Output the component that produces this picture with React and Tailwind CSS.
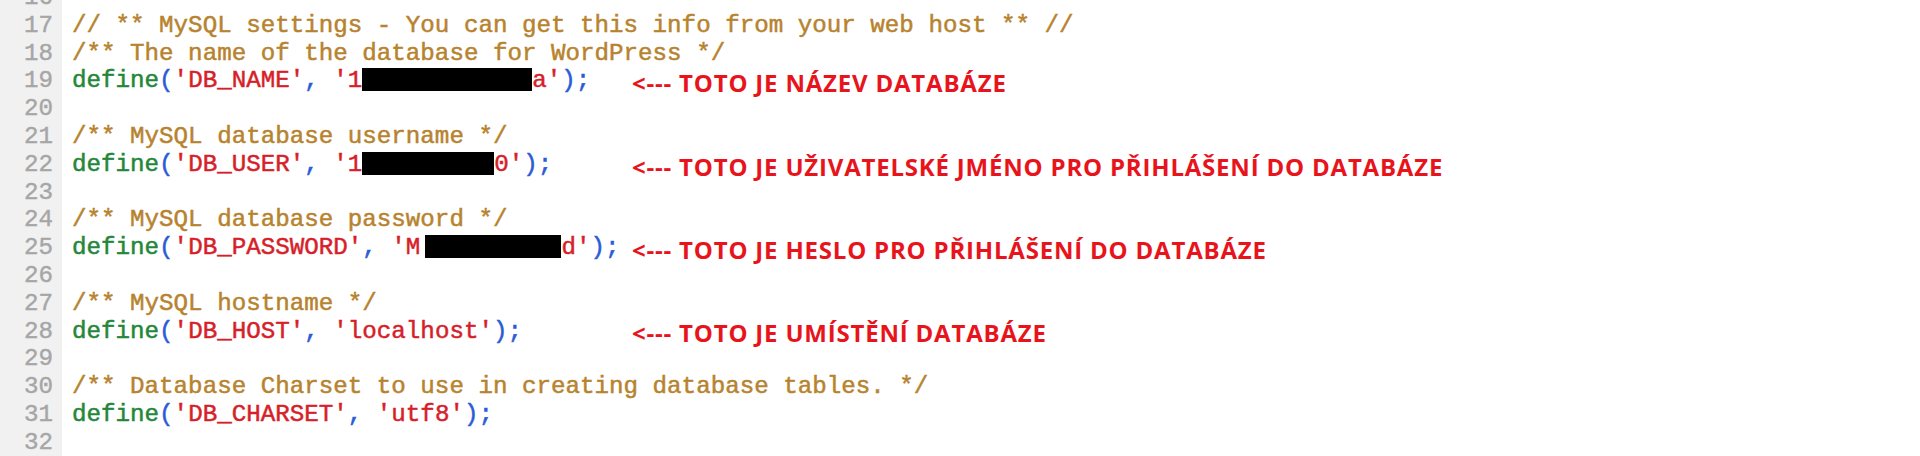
const lines = [
  { n: 16 },
  { n: 17, comment: "// ** MySQL settings - You can get this info from your web host ** //" },
  { n: 18, comment: "/** The name of the database for WordPress */" },
  { n: 19, key: "DB_NAME", pre: "1", box: 170, post: "a", note: "<--- TOTO JE NÁZEV DATABÁZE" },
  { n: 20 },
  { n: 21, comment: "/** MySQL database username */" },
  { n: 22, key: "DB_USER", pre: "1", box: 132, post: "0", note: "<--- TOTO JE UŽIVATELSKÉ JMÉNO PRO PŘIHLÁŠENÍ DO DATABÁZE" },
  { n: 23 },
  { n: 24, comment: "/** MySQL database password */" },
  { n: 25, key: "DB_PASSWORD", pre: "M", box: 136, gap: true, post: "d", note: "<--- TOTO JE HESLO PRO PŘIHLÁŠENÍ DO DATABÁZE" },
  { n: 26 },
  { n: 27, comment: "/** MySQL hostname */" },
  { n: 28, key: "DB_HOST", pre: "localhost", post: "", note: "<--- TOTO JE UMÍSTĚNÍ DATABÁZE" },
  { n: 29 },
  { n: 30, comment: "/** Database Charset to use in creating database tables. */" },
  { n: 31, key: "DB_CHARSET", pre: "utf8", post: "" },
  { n: 32 },
];

function Define({ line }) {
  return (
    <>
      <span className="text-[#23873a]">define</span>
      <span className="text-[#2a5bd6]">(</span>
      <span className="text-[#d61f2a]">'{line.key}'</span>
      <span className="text-[#2a5bd6]">, </span>
      <span className="text-[#d61f2a]">'{line.pre}</span>
      {line.box && (
        <span
          className={`inline-block h-[23px] bg-black align-[-4px] ${line.gap ? "ml-[5px]" : ""}`}
          style={{ width: line.box }}
        ></span>
      )}
      <span className="text-[#d61f2a]">{line.post}'</span>
      <span className="text-[#2a5bd6]">);</span>
    </>
  );
}

export default function App() {
  return (
    <div className="w-[1920px] h-[456px] overflow-hidden bg-white">
      <div className="-mt-[16px] font-['Liberation_Mono',monospace] text-[24.2px] leading-[27.8px] whitespace-pre">
        {lines.map((line) => (
          <div key={line.n} className="flex items-center h-[27.8px]">
            <div className="w-[62px] h-full bg-[#f1f1f1] text-[#a6a6a6] text-right pr-[9px] [-webkit-text-stroke:0.4px]">{line.n}</div>
            <div className="w-[570px] pl-[10px] [-webkit-text-stroke:0.5px]">
              {line.comment && <span className="text-[#b7832f]">{line.comment}</span>}
              {line.key && <Define line={line} />}
            </div>
            {line.note && (
              <div className="font-['Open_Sans',sans-serif] font-bold text-[24px] leading-none text-[#e8141c] tracking-[0.8px] mt-[4px]">
                {line.note}
              </div>
            )}
          </div>
        ))}
      </div>
    </div>
  );
}
